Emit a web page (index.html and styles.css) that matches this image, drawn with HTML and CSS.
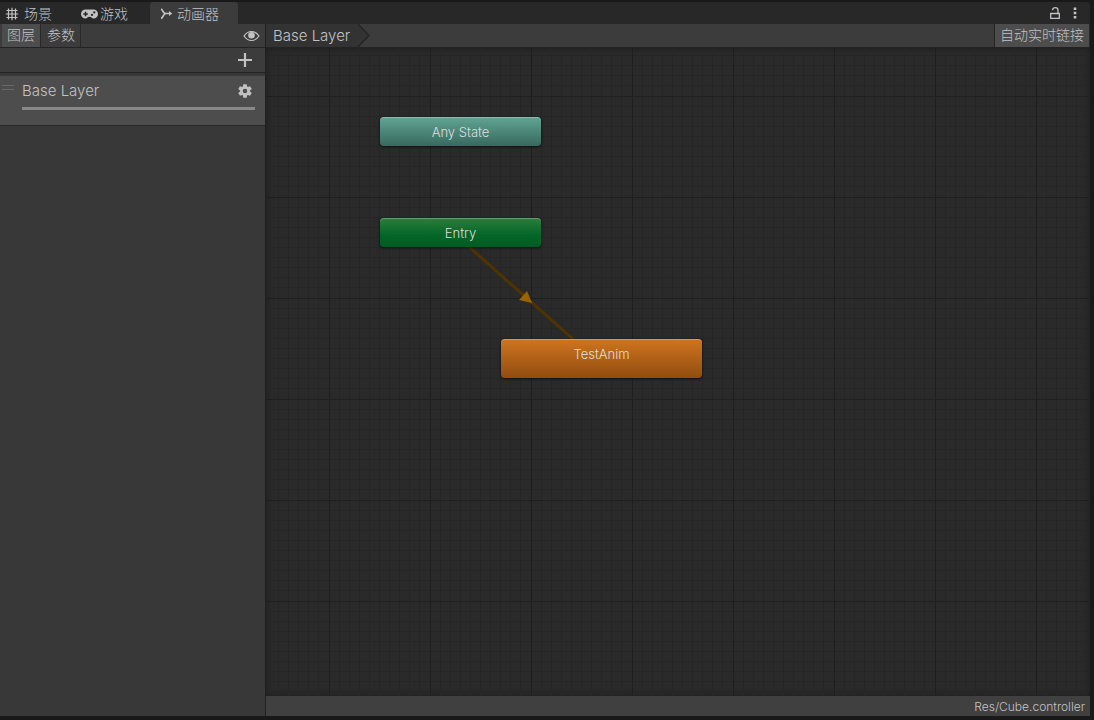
FILE: index.html
```html
<!DOCTYPE html>
<html lang="zh-CN">
<head>
<meta charset="utf-8">
<meta name="viewport" content="width=device-width, initial-scale=1">
<title>动画器</title>
<link rel="stylesheet" href="styles.css">
</head>
<body>
<div class="window">
  <header class="tabs">
    <button class="tab" type="button">
      <svg class="icon" width="14" height="14" viewBox="0 0 14 14" aria-hidden="true"><path d="M3.500 1.500v11M7 .8v12.400M10.500 1.500v11M1.500 3.500h11M.8 7h12.400M1.500 10.500h11" fill="none" stroke="currentColor" stroke-width="1.200"/></svg>
      场景
    </button>
    <button class="tab tab-game" type="button">
      <svg class="icon" width="17" height="12" viewBox="0 0 17 12" aria-hidden="true"><path fill="currentColor" fill-rule="evenodd" d="M4.500 1.500h8a4.200 4.200 0 0 1 0 9c-1.600 0-2.200-1.700-4-1.700s-2.400 1.700-4 1.700a4.200 4.200 0 0 1 0-9zM3.800 3.700v1.500H2.300v1.500h1.500v1.500h1.500V6.700h1.500V5.200H5.300V3.700zM13.300 3.300a1.100 1.100 0 1 0 0 2.200 1.100 1.100 0 0 0 0-2.200zM11 5.800a1.100 1.100 0 1 0 0 2.200 1.100 1.100 0 0 0 0-2.200z"/></svg>
      游戏
    </button>
    <button class="tab tab-active" type="button">
      <svg class="icon" width="13" height="12" viewBox="0 0 13 12" aria-hidden="true"><path d="M1 1.200c1.300.2 1.400 1.200 2 2.300C3.700 4.800 4.700 5.500 6 5.500h4M1 10.300c1.300-.2 1.600-1.200 2.200-2.400C3.900 6.500 4.700 5.500 6 5.500" fill="none" stroke="currentColor" stroke-width="1.700"/><path d="M9 3 12.300 5.500 9 8z" fill="currentColor"/></svg>
      动画器
    </button>
    <div class="tab-tools">
      <button class="plain" type="button" aria-label="锁定"><svg width="12" height="14" viewBox="0 0 12 14" aria-hidden="true"><path d="M1.700 7.500h8.600v4.800H1.700zM3.500 4.200c0-3.400 5.500-3.400 5.500 0v3" fill="none" stroke="currentColor" stroke-width="1.300"/></svg></button>
      <button class="plain" type="button" aria-label="更多"><svg width="4" height="14" viewBox="0 0 4 14" aria-hidden="true"><path d="M.7 1.500h2.600v2.600H.7zM.7 5.700h2.600v2.600H.7zM.7 9.900h2.600v2.600H.7z" fill="currentColor"/></svg></button>
    </div>
  </header>
  <div class="content">
    <aside class="sidebar">
      <div class="toolbar side-toolbar">
        <button class="tool tool-on" type="button">图层</button>
        <button class="tool" type="button">参数</button>
        <button class="plain eye" type="button" aria-label="显示"><svg width="17" height="12" viewBox="0 0 17 12" aria-hidden="true"><path d="M1 6c4-6 11-6 15 0-4 6-11 6-15 0z" fill="none" stroke="currentColor" stroke-width="1.200"/><circle cx="8.500" cy="5.300" r="3.300" fill="currentColor"/></svg></button>
      </div>
      <div class="add-row">
        <button class="plain" type="button" aria-label="添加图层"><svg width="14" height="14" viewBox="0 0 14 14" aria-hidden="true"><path d="M7 0v14M0 7h14" stroke="currentColor" stroke-width="2.200"/></svg></button>
      </div>
      <div class="layer">
        <span class="grip"></span>
        <div class="layer-body">
          <div class="layer-head">
            <span>Base Layer</span>
            <button class="plain" type="button" aria-label="设置"><svg width="14" height="14" viewBox="-7 -7 14 14" aria-hidden="true"><g fill="currentColor"><path id="tooth" d="M-1.700-6.800h3.400l.5 3h-4.400zM-1.700 6.800h3.400l.5-3h-4.400z"/><use href="#tooth" transform="rotate(60)"/><use href="#tooth" transform="rotate(120)"/></g><circle r="3.600" fill="none" stroke="currentColor" stroke-width="2.600"/></svg></button>
          </div>
          <div class="weight"></div>
        </div>
      </div>
    </aside>
    <main class="graph">
      <div class="toolbar">
        <button class="crumb" type="button">Base Layer</button>
        <svg class="crumb-end" width="13" height="23" viewBox="0 0 13 23" aria-hidden="true"><path d="M0 0 11 11.500 0 23z" fill="#333"/><path d="M0 0 11 11.500 0 23" fill="none" stroke="#242424" stroke-width="1.300"/></svg>
        <button class="tool tool-on live" type="button">自动实时链接</button>
      </div>
      <div class="canvas">
        <svg class="grid" width="100%" height="100%" aria-hidden="true">
          <defs>
            <pattern id="cells" x="62" y="47" width="101" height="101" patternUnits="userSpaceOnUse">
              <path class="minor" d="M11 0v101M21 0v101M31 0v101M41 0v101M51 0v101M61 0v101M71 0v101M81 0v101M91 0v101M0 11h101M0 21h101M0 31h101M0 41h101M0 51h101M0 61h101M0 71h101M0 81h101M0 91h101"/>
              <path class="major" d="M1 0v101M0 1h101"/>
            </pattern>
          </defs>
          <rect width="100%" height="100%" fill="url(#cells)"/>
          <path d="M193 190 316 299" stroke="#503400" stroke-width="3"/>
          <path d="m261 243 5 12-13-3z" fill="#986300"/>
        </svg>
        <button class="node any" type="button">Any State</button>
        <button class="node entry" type="button">Entry</button>
        <button class="node anim" type="button">TestAnim</button>
      </div>
      <footer class="status">Res/Cube.controller</footer>
    </main>
  </div>
</div>
</body>
</html>
```
FILE: styles.css
```css
* { box-sizing: border-box; }

body {
  margin: 0;
  background: #191919;
  color: #c2c2c2;
  font: 300 14px/20px Inter, "Noto Sans CJK SC", sans-serif;
}

button {
  margin: 0;
  padding: 0;
  border: 0;
  background: none;
  color: inherit;
  font: inherit;
}

svg { display: block; }

.window {
  display: flex;
  flex-direction: column;
  height: 100vh;
  padding: 2px 4px 4px 0;
}

.tabs {
  display: flex;
  height: 22px;
  background: #282828;
  border-radius: 0 4px 0 0;
}

.tab {
  display: flex;
  align-items: center;
  gap: 5px;
  padding: 2px 10px 0 5px;
  white-space: nowrap;
}

.tab-game {
  gap: 2px;
  margin-left: 14px;
}

.tab-active {
  width: 88px;
  margin-left: 12px;
  padding-left: 10px;
  gap: 4px;
  background: #3c3c3c;
  border-radius: 4px 4px 0 0;
}

.tab-tools {
  display: flex;
  align-items: center;
  gap: 12px;
  margin-left: auto;
  padding-right: 13px;
}

.content {
  display: flex;
  flex: 1;
  min-height: 0;
}

.sidebar {
  width: 266px;
  flex: none;
  background: #383838;
  border-right: 1px solid #202020;
}

.toolbar {
  display: flex;
  height: 24px;
  background: #3c3c3c;
  border-bottom: 1px solid #232323;
}

.side-toolbar { padding-left: 2px; }

.tool {
  padding: 0 5px 2px;
  border-right: 1px solid #282828;
  white-space: nowrap;
}

.side-toolbar .tool + .tool { padding: 0 5px 2px 6px; }

.tool-on { background: #4d4d4d; }

.eye {
  margin-left: auto;
  padding-right: 5px;
}

.add-row {
  display: flex;
  justify-content: flex-end;
  align-items: center;
  height: 25px;
  padding-right: 13px;
  background: #3c3c3c;
  border-bottom: 1px solid #232323;
}

.layer {
  display: flex;
  gap: 8px;
  margin-top: 3px;
  padding: 4px 10px 15px 2px;
  background: #4d4d4d;
  border-bottom: 1px solid #282828;
}

.grip {
  width: 12px;
  height: 5px;
  margin-top: 5px;
  border: solid #666;
  border-width: 1px 0;
}

.layer-body { flex: 1; }

.layer-head {
  display: flex;
  justify-content: space-between;
  align-items: center;
  height: 22px;
  padding-right: 3px;
  font-size: 15px;
}

.weight {
  height: 3px;
  margin-top: 5px;
  background: #888;
}

.graph {
  display: flex;
  flex: 1;
  flex-direction: column;
  min-width: 0;
}

.crumb {
  padding: 0 8px 0 7px;
  background: #333;
  font-size: 15px;
}

.live {
  margin-left: auto;
  padding-left: 5px;
  border-left: 1px solid #242424;
}

.canvas {
  position: relative;
  flex: 1;
  min-height: 0;
  overflow: hidden;
  background: #2a2a2a;
  box-shadow: inset 0 0 6px #1c1c1c;
}

.grid {
  position: absolute;
  inset: 0;
}

.minor, .major {
  fill: none;
  stroke-width: 1px;
  shape-rendering: crispEdges;
}

.minor { stroke: #262626; }
.major { stroke: #1f1f1f; }

.node {
  position: absolute;
  left: 114px;
  width: 161px;
  height: 29px;
  border-radius: 4px;
  box-shadow: inset 0 1px #ffffff40, 0 1px 3px #000000a0;
  color: #dedede;
  font-size: 13px;
}

.any {
  top: 69px;
  background: linear-gradient(#61a594, #38695f);
}

.entry {
  top: 170px;
  background: linear-gradient(#2d7e3c, #036628 60%, #005c22);
}

.anim {
  left: 235px;
  top: 291px;
  width: 201px;
  height: 39px;
  padding-bottom: 10px;
  background: linear-gradient(#cf7520, #914d0f);
}

.status {
  height: 20px;
  padding-right: 5px;
  background: #404040;
  font-size: 12px;
  line-height: 22px;
  text-align: right;
}
```
